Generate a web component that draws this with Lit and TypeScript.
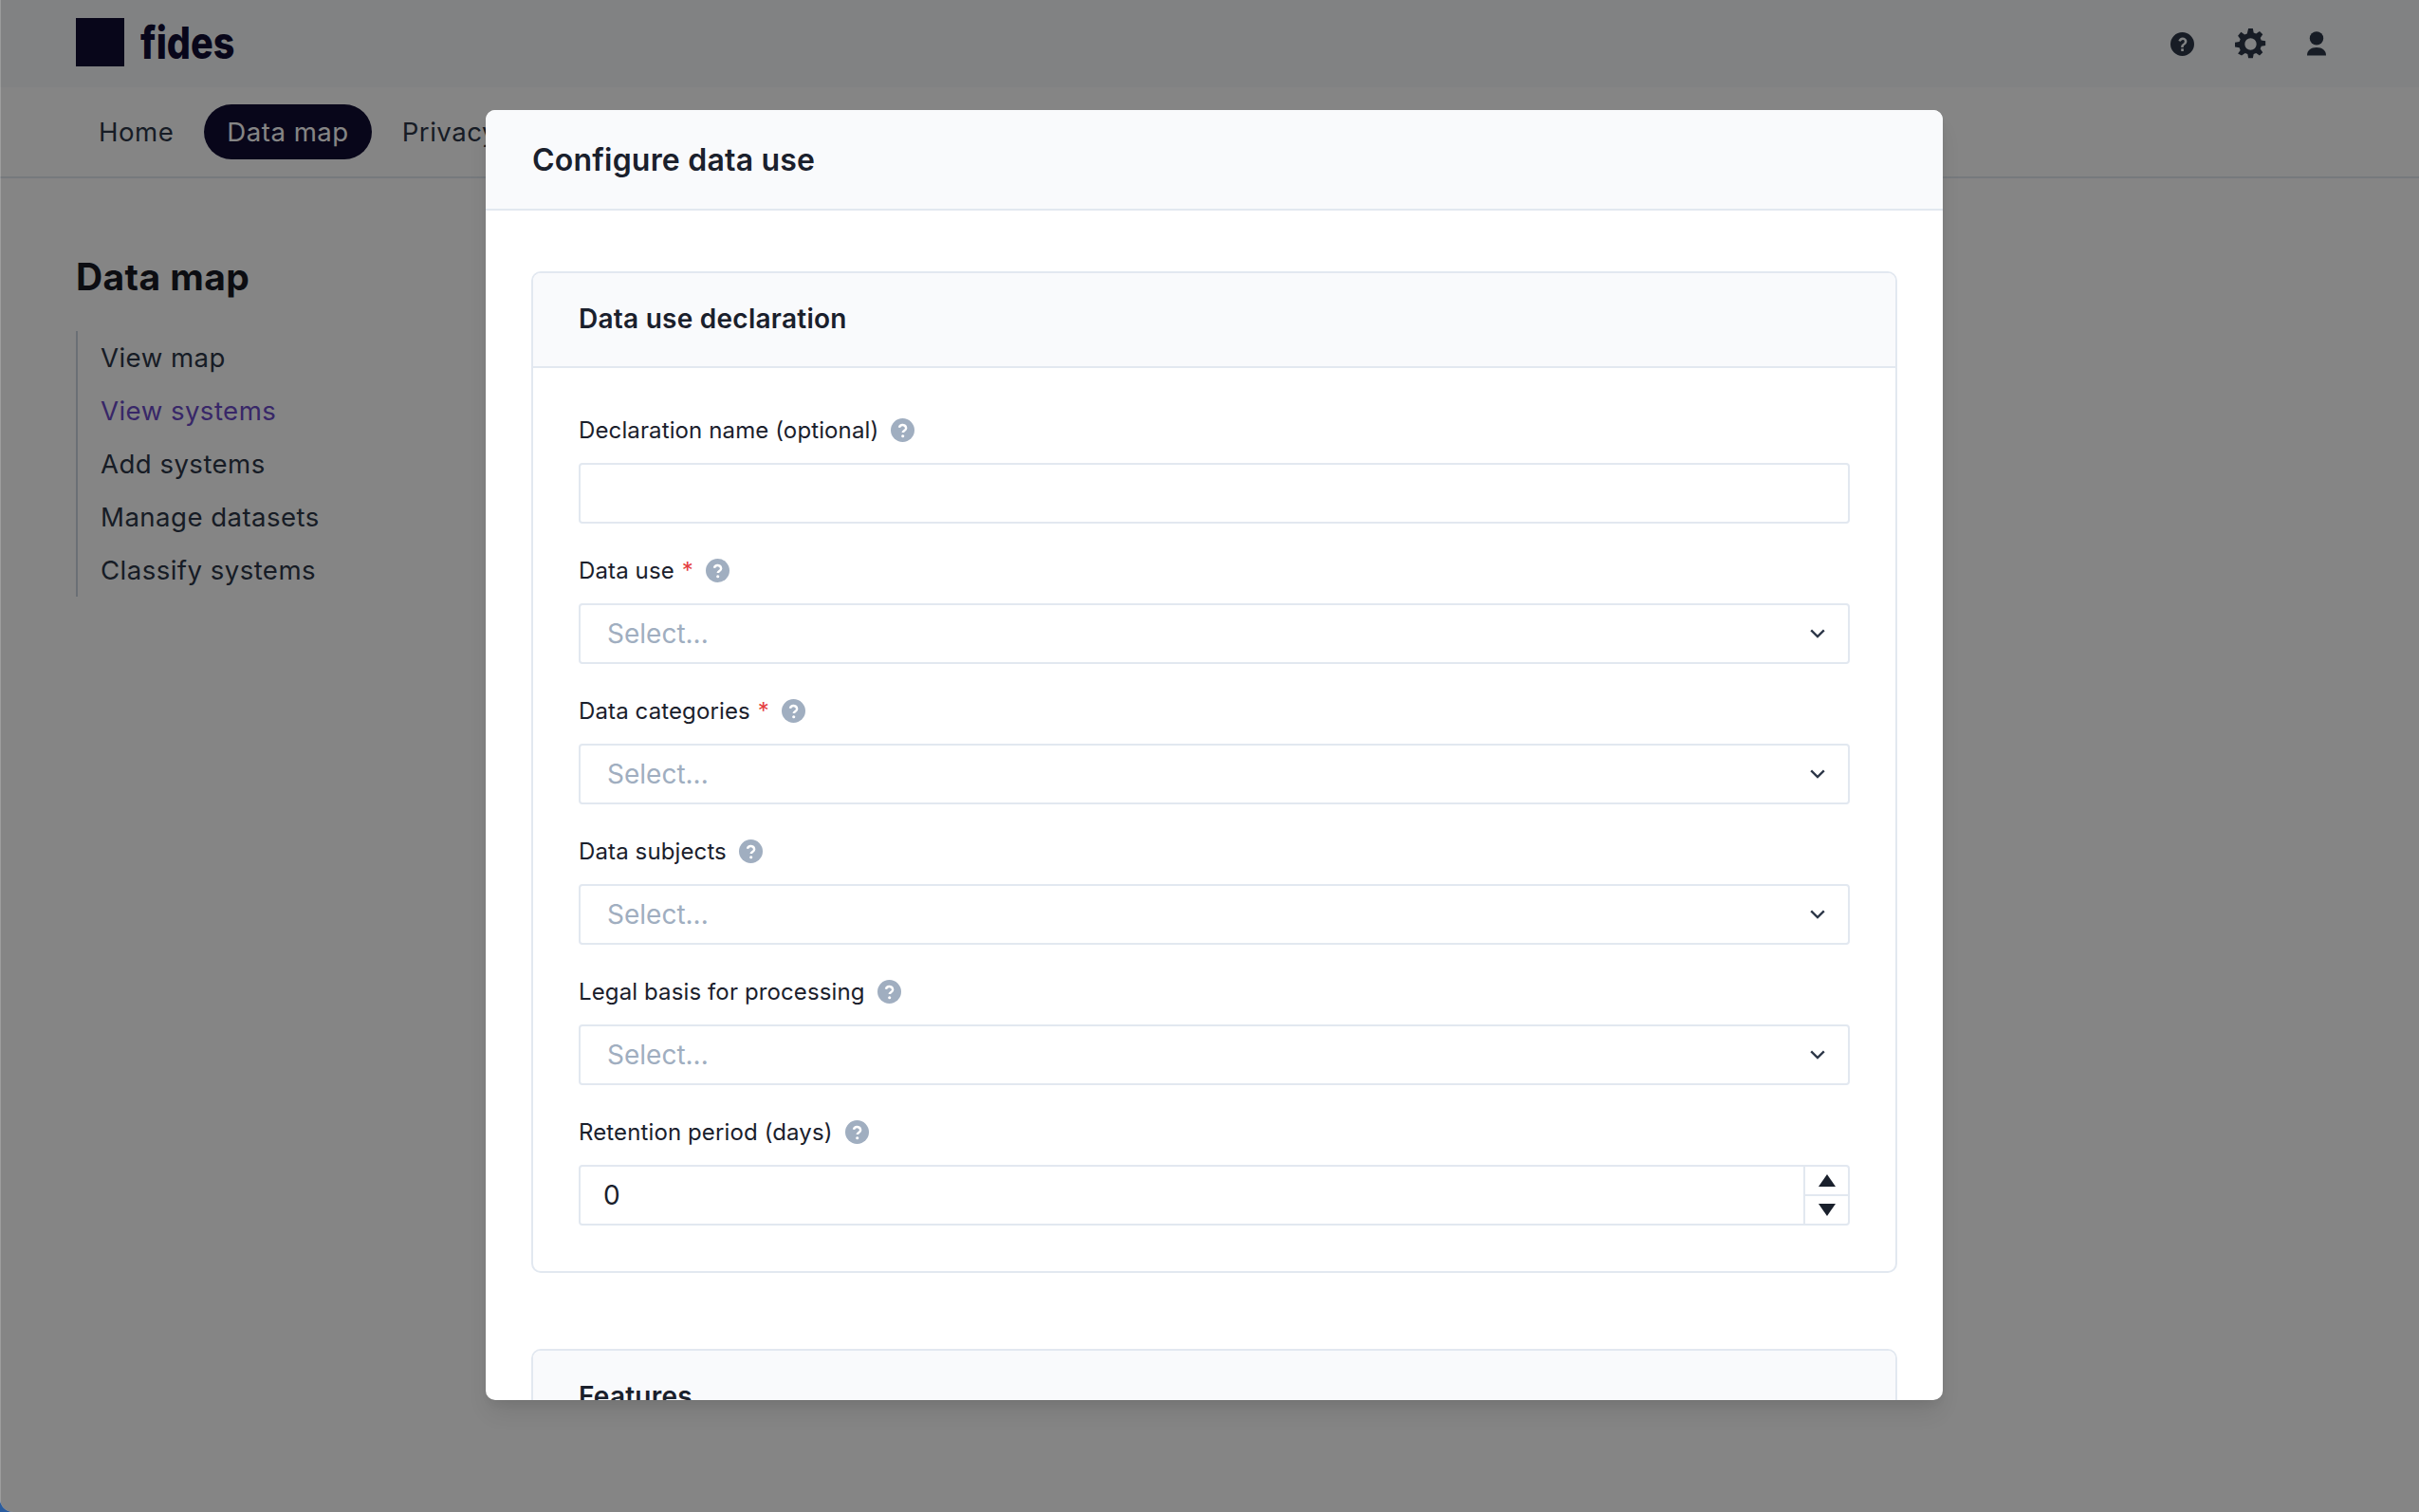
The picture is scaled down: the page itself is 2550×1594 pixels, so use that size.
import { LitElement, css, html } from "lit";
import { customElement } from "lit/decorators.js";

const mainNav = ["Home", "Data map", "Privacy"];
const sideNav = ["View map", "View systems", "Add systems", "Manage datasets", "Classify systems"];

const fields = [
  { label: "Data use", required: true },
  { label: "Data categories", required: true },
  { label: "Data subjects", required: false },
  { label: "Legal basis for processing", required: false },
];

const helpIcon = html`<svg class="help" viewBox="0 0 24 24" aria-hidden="true">
  <circle cx="12" cy="12" r="12" fill="#a0aec0"></circle>
  <path d="M8.6 9.4a3.5 3.5 0 0 1 6.9.6c0 2.2-3.3 2.6-3.3 4.4" fill="none" stroke="#fff" stroke-width="2.3"></path>
  <circle cx="12.2" cy="18" r="1.5" fill="#fff"></circle>
</svg>`;

const chevron = html`<svg class="chevron" viewBox="0 0 16 10" aria-hidden="true">
  <path d="M1.2 1.4 8 8l6.8-6.6" fill="none" stroke="#2d3748" stroke-width="2.4"></path>
</svg>`;

@customElement("app-root")
export class AppRoot extends LitElement {
  static styles = css`
    :host {
      display: block;
      width: 2550px;
      height: 1594px;
      background: #2a5c9e;
      font-family: Inter, "Liberation Sans", sans-serif;
      color: #1a202c;
    }

    * {
      box-sizing: border-box;
    }

    .screen {
      position: relative;
      width: 100%;
      height: 100%;
      overflow: hidden;
      background: #fff;
      border-radius: 0 0 0 14px;
    }

    .topbar {
      display: flex;
      align-items: center;
      height: 92px;
      padding: 0 98px 4px 80px;
      background: #f7fafc;
    }

    .logo-mark {
      width: 51px;
      height: 51px;
      background: #100d33;
    }

    .logo-text {
      margin-left: 17px;
      font-size: 47px;
      font-weight: 800;
      color: #100d33;
      line-height: 1;
      transform: scaleX(0.84);
      transform-origin: left center;
    }

    .top-icons {
      display: flex;
      align-items: center;
      margin-left: auto;
      padding-top: 4px;
    }

    .top-icons svg {
      display: block;
      fill: #2d3748;
    }

    .icon-help {
      width: 25px;
      height: 25px;
    }

    .icon-gear {
      width: 33px;
      height: 33px;
      margin-left: 43px;
    }

    .icon-user {
      width: 20px;
      height: 26px;
      margin-left: 43px;
    }

    .mainnav {
      display: flex;
      align-items: center;
      gap: 8px;
      height: 96px;
      padding-left: 80px;
      border-bottom: 2px solid #e2e8f0;
    }

    .mainnav a {
      padding: 0 24px;
      height: 58px;
      line-height: 58px;
      font-size: 27.6px;
      letter-spacing: 0.5px;
      color: #2d3748;
      white-space: nowrap;
    }

    .mainnav a.active {
      border-radius: 29px;
      background: #100d33;
      color: #fff;
    }

    .content {
      padding: 80px 80px 0;
    }

    h1 {
      margin: 0 0 34px;
      font-size: 39px;
      line-height: 47px;
      font-weight: 700;
      letter-spacing: 0.4px;
      color: #171923;
    }

    .sidenav {
      display: flex;
      flex-direction: column;
      border-left: 2px solid #cbd5e0;
      padding-left: 24px;
      height: 280px;
    }

    .sidenav a {
      flex: none;
      height: 56px;
      line-height: 56px;
      font-size: 27.6px;
      letter-spacing: 0.45px;
      color: #2d3748;
    }

    .sidenav a.active {
      color: #6b4bc8;
    }

    .overlay {
      position: absolute;
      inset: 0;
      background: rgba(0, 0, 0, 0.48);
      border-left: 1px solid rgba(255, 255, 255, 0.2);
    }

    .modal {
      position: absolute;
      left: 512px;
      top: 116px;
      width: 1536px;
      height: 1360px;
      overflow: hidden;
      border-radius: 10px;
      background: #fff;
      box-shadow: 0 16px 24px -5px rgba(0, 0, 0, 0.1), 0 6px 10px -3px rgba(0, 0, 0, 0.05);
    }

    .modal-head {
      display: flex;
      align-items: center;
      height: 106px;
      padding: 0 49px;
      background: #f9fafc;
      border-bottom: 2px solid #e2e8f0;
      font-size: 32px;
      font-weight: 600;
      letter-spacing: 0.2px;
    }

    .modal-body {
      display: flex;
      flex-direction: column;
      gap: 80px;
      padding: 64px 48px 0;
    }

    .card {
      flex: none;
      border: 2px solid #e2e8f0;
      border-radius: 10px;
      overflow: hidden;
    }

    .card-head {
      display: flex;
      align-items: center;
      height: 100px;
      padding: 0 48px 2px;
      background: #f9fafc;
      border-bottom: 2px solid #e2e8f0;
      font-size: 28px;
      font-weight: 600;
      letter-spacing: 0.25px;
    }

    .card-body {
      display: flex;
      flex-direction: column;
      gap: 32px;
      padding: 48px;
    }

    .label {
      display: flex;
      align-items: center;
      height: 34px;
      margin-bottom: 18px;
      font-size: 24px;
      font-weight: 400;
      letter-spacing: 0.12px;
    }

    .req {
      margin-left: 8px;
      color: #e53e3e;
    }

    .help {
      display: block;
      width: 25px;
      height: 25px;
      margin-left: 13px;
    }

    .control {
      display: flex;
      align-items: center;
      height: 64px;
      border: 2px solid #e2e8f0;
      border-radius: 4px;
      font-size: 28px;
    }

    .select {
      justify-content: space-between;
      padding: 0 24px 0 28px;
      color: #a0aec0;
    }

    .chevron {
      display: block;
      width: 16px;
      height: 10px;
    }

    .number {
      padding-left: 24px;
    }

    .stepper {
      display: flex;
      flex-direction: column;
      width: 47px;
      height: 100%;
      margin-left: auto;
      border-left: 2px solid #e2e8f0;
    }

    .stepper span {
      flex: 1;
      display: flex;
      align-items: center;
      justify-content: center;
    }

    .stepper span + span {
      border-top: 2px solid #e2e8f0;
    }

    .stepper svg {
      display: block;
      width: 18px;
      height: 13px;
      fill: #1a202c;
    }
  `;

  render() {
    return html`
      <div class="screen">
        <div class="topbar">
          <div class="logo-mark"></div>
          <div class="logo-text">fides</div>
          <div class="top-icons">
            <svg class="icon-help" viewBox="0 0 24 24">
              <path d="M12 0a12 12 0 1 0 0 24 12 12 0 0 0 0-24Zm-1.2 19.2v-2.6h2.5v2.6Zm4.7-7.2c-.8.8-1.7 1.3-2.1 2-.2.4-.2.8-.2 1.3h-2.5c0-1 .1-1.8.6-2.5.6-.9 1.6-1.4 2.3-2.1.5-.5.7-1 .6-1.6-.2-.9-1-1.4-1.9-1.3-.9 0-1.7.6-2 1.6L8 8.6C8.6 6.600 10.300 5.300 12.300 5.200c2.100 0 3.900 1.200 4.300 3.200.3 1.400-.2 2.600-1.100 3.600Z"></path>
            </svg>
            <svg class="icon-gear" viewBox="0 0 32 32">
              <path fill-rule="evenodd" d="M13.700 0h4.600l.8 4.300 2.500 1 3.600-2.500 3.200 3.200-2.500 3.600 1 2.500 4.300.8v4.600l-4.300.8-1 2.500 2.500 3.600-3.200 3.200-3.600-2.500-2.500 1-.8 4.300h-4.600l-.8-4.300-2.500-1-3.600 2.500L3 25.800l2.500-3.600-1-2.500L0 18.900v-4.600l4.500-.8 1-2.500L3 7.400 6.200 3.700l3.700 2.600 2.500-1ZM16 10a6 6 0 1 0 0 12 6 6 0 0 0 0-12Z"></path>
            </svg>
            <svg class="icon-user" viewBox="0 0 20 26">
              <circle cx="10" cy="7.400" r="7.200"></circle>
              <path d="M0 25.500C0 20 4 17 10 17s10 3 10 8.500Z"></path>
            </svg>
          </div>
        </div>
        <nav class="mainnav">
          ${mainNav.map((item) => html`<a class=${item === "Data map" ? "active" : ""}>${item}</a>`)}
        </nav>
        <div class="content">
          <h1>Data map</h1>
          <div class="sidenav">
            ${sideNav.map((item) => html`<a class=${item === "View systems" ? "active" : ""}>${item}</a>`)}
          </div>
        </div>
        <div class="overlay"></div>
        <div class="modal">
          <div class="modal-head">Configure data use</div>
          <div class="modal-body">
            <section class="card">
              <div class="card-head">Data use declaration</div>
              <div class="card-body">
                <div>
                  <div class="label">Declaration name (optional) ${helpIcon}</div>
                  <div class="control"></div>
                </div>
                ${fields.map(
                  (field) => html`<div>
                    <div class="label">
                      ${field.label}${field.required ? html`<span class="req">*</span>` : ""} ${helpIcon}
                    </div>
                    <div class="control select">Select... ${chevron}</div>
                  </div>`,
                )}
                <div>
                  <div class="label">Retention period (days) ${helpIcon}</div>
                  <div class="control number">
                    0
                    <div class="stepper">
                      <span><svg viewBox="0 0 18 13"><path d="M9 0l9 13H0Z"></path></svg></span>
                      <span><svg viewBox="0 0 18 13"><path d="M0 0h18L9 13Z"></path></svg></span>
                    </div>
                  </div>
                </div>
              </div>
            </section>
            <section class="card">
              <div class="card-head">Features</div>
            </section>
          </div>
        </div>
      </div>
    `;
  }
}
